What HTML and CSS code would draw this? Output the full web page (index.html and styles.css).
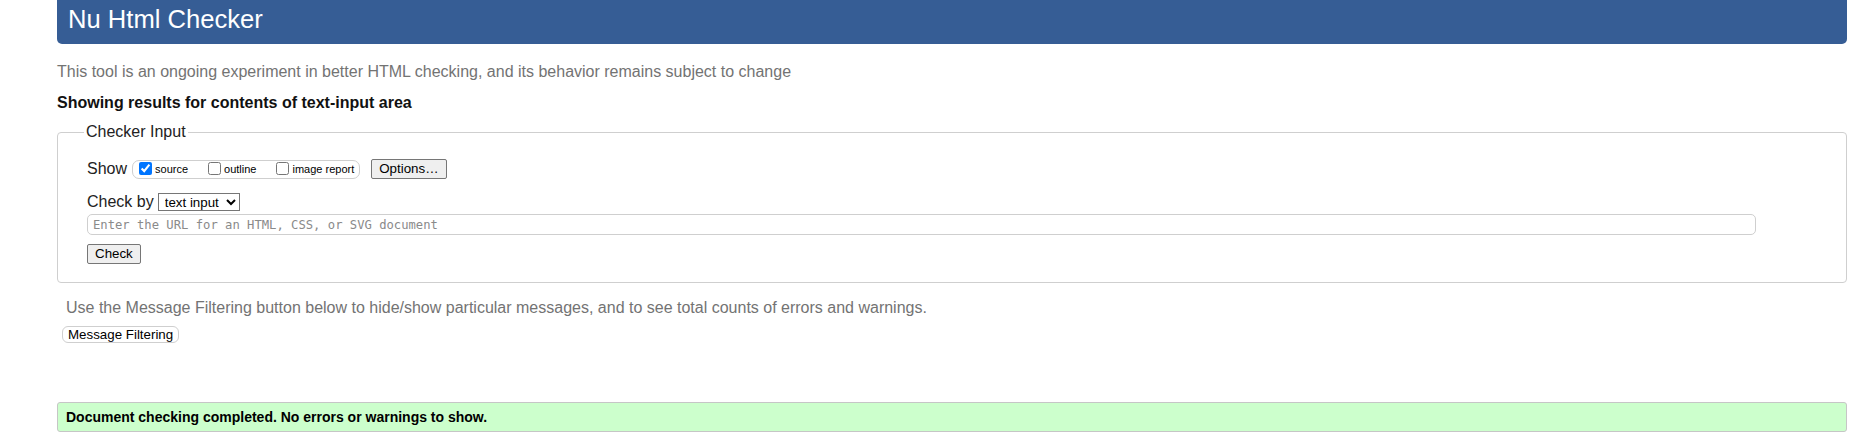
FILE: index.html
```html
<!DOCTYPE html>
<html lang="en">
<head>
<meta charset="utf-8">
<title>Nu Html Checker</title>
<link rel="stylesheet" href="styles.css">
</head>
<body>
<div class="page">
  <header class="banner"><h1 class="title">Nu Html Checker</h1></header>
  <p class="intro">This tool is an ongoing experiment in better HTML checking, and its behavior remains subject to change</p>
  <p class="showing">Showing results for contents of text-input area</p>
  <fieldset class="checker">
    <legend class="legend">Checker Input</legend>
    <div class="row show-row">
      <span class="row-label">Show</span>
      <span class="show-box">
        <label class="opt"><input class="cb" type="checkbox" checked><span>source</span></label>
        <label class="opt"><input class="cb" type="checkbox"><span>outline</span></label>
        <label class="opt"><input class="cb" type="checkbox"><span>image report</span></label>
      </span>
      <button class="btn btn-options" type="button">Options…</button>
    </div>
    <div class="row by-row">
      <span class="row-label">Check by</span>
      <select class="sel"><option>text input</option></select>
    </div>
    <input class="url" type="text" placeholder="Enter the URL for an HTML, CSS, or SVG document">
    <button class="btn btn-check" type="button">Check</button>
  </fieldset>
  <p class="filter-note">Use the Message Filtering button below to hide/show particular messages, and to see total counts of errors and warnings.</p>
  <button class="pill" type="button">Message Filtering</button>
  <div class="success">Document checking completed. No errors or warnings to show.</div>
</div>
</body>
</html>
```

FILE: styles.css
```css
html, body {
  margin: 0;
  padding: 0;
  background: #fff;
}

body {
  font-family: "Liberation Sans", Arial, sans-serif;
  font-size: 16px;
  line-height: 18px;
  color: #000;
}

.page {
  margin-left: 57px;
  width: 1790px;
}

.banner {
  height: 44px;
  background: #365d95;
  border-radius: 0 0 5px 5px;
  padding-left: 11px;
  box-sizing: border-box;
}

.title {
  margin: 0;
  font-size: 25.6px;
  font-weight: normal;
  line-height: 38px;
  color: #fff;
}

.intro {
  margin: 19px 0 0 0;
  color: #737373;
}

.showing {
  margin: 13px 0 0 0;
  font-weight: bold;
  color: #111;
}

.checker {
  margin: 11px 0 0 0;
  padding: 18px 29px 18px 29px;
  border: 1px solid #cfcfcf;
  border-radius: 4px;
  min-width: 0;
  box-sizing: border-box;
  width: 100%;
}

.legend {
  padding: 0 2px;
  margin-left: -3px;
  line-height: 18px;
  color: #222;
}

.row {
  display: flex;
  align-items: center;
  color: #222;
}

.show-row {
  height: 20px;
}

.by-row {
  height: 18px;
  margin-top: 14px;
}

.row-label {
  line-height: 18px;
}

.show-box {
  display: flex;
  align-items: center;
  height: 19px;
  box-sizing: border-box;
  margin-left: 5px;
  padding: 0 5px 0 6px;
  border: 1px solid #cfcfcf;
  border-radius: 7px;
  align-self: flex-start;
  margin-top: 1px;
  gap: 20px;
}

.opt {
  display: flex;
  align-items: center;
  gap: 3px;
  font-size: 11px;
  line-height: 13px;
  color: #000;
}

.cb {
  margin: 0;
  width: 13px;
  height: 13px;
  position: relative;
  top: -1px;
}

.btn {
  font-family: "Liberation Sans", Arial, sans-serif;
  font-size: 13.333px;
  line-height: 16px;
  height: 20px;
  box-sizing: border-box;
  padding: 0 7px;
  background: #efefef;
  color: #000;
  border: 1px solid #767676;
  border-radius: 2px;
}

.btn-options {
  margin-left: 11px;
}

.sel {
  margin-left: 4px;
  width: 82px;
  height: 18px;
  box-sizing: border-box;
  font-family: "Liberation Sans", Arial, sans-serif;
  font-size: 13.333px;
  padding: 0 0 0 2px;
  border: 1px solid #767676;
  border-radius: 0;
  background: #fff;
  color: #000;
}

.url {
  display: block;
  margin-top: 3px;
  width: 1669px;
  height: 21px;
  box-sizing: border-box;
  padding: 0 5px;
  border: 1px solid #cfcfcf;
  border-radius: 5px;
  font-family: "DejaVu Sans Mono", "Liberation Mono", monospace;
  font-size: 12.2px;
  color: #000;
  outline: none;
}

.url::placeholder {
  color: #8a8a8a;
}

.btn-check {
  display: block;
  margin-top: 9px;
}

.filter-note {
  margin: 16px 0 0 9px;
  color: #737373;
}

.pill {
  display: block;
  margin: 9px 0 0 5px;
  height: 17px;
  box-sizing: border-box;
  padding: 0 5px;
  font-family: "Liberation Sans", Arial, sans-serif;
  font-size: 13.333px;
  line-height: 15px;
  background: #fff;
  color: #000;
  border: 1px solid #cfcfcf;
  border-radius: 6px;
}

.success {
  margin-top: 59px;
  padding: 6px 8px;
  font-size: 14px;
  line-height: 16px;
  font-weight: bold;
  background: #ccffcc;
  border: 1px solid #c6c6c6;
  border-radius: 3px;
  color: #000;
}
```
